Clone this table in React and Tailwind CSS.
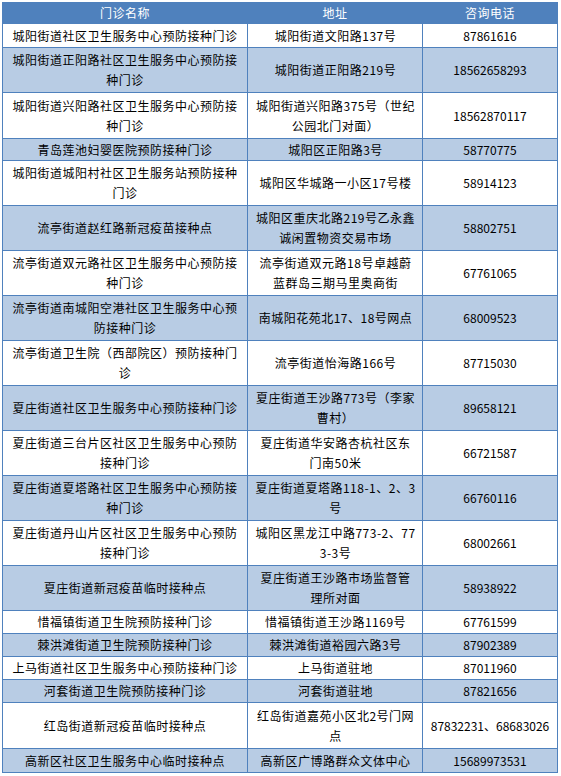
import React from 'react';

// row heights include the 1px divider line on top
const rows = [
  { name: '城阳街道社区卫生服务中心预防接种门诊', addr: '城阳街道文阳路137号', tel: '87861616', h: 'h-[24px]' },
  { name: '城阳街道正阳路社区卫生服务中心预防接种门诊', addr: '城阳街道正阳路219号', tel: '18562658293', h: 'h-[45px]' },
  { name: '城阳街道兴阳路社区卫生服务中心预防接种门诊', addr: '城阳街道兴阳路375号（世纪公园北门对面）', tel: '18562870117', h: 'h-[46px]' },
  { name: '青岛莲池妇婴医院预防接种门诊', addr: '城阳区正阳路3号', tel: '58770775', h: 'h-[22px]' },
  { name: '城阳街道城阳村社区卫生服务站预防接种门诊', addr: '城阳区华城路一小区17号楼', tel: '58914123', h: 'h-[45px]' },
  { name: '流亭街道赵红路新冠疫苗接种点', addr: '城阳区重庆北路219号乙永鑫诚闲置物资交易市场', tel: '58802751', h: 'h-[45px]' },
  { name: '流亭街道双元路社区卫生服务中心预防接种门诊', addr: '流亭街道双元路18号卓越蔚蓝群岛三期马里奥商街', tel: '67761065', h: 'h-[45px]' },
  { name: '流亭街道南城阳空港社区卫生服务中心预防接种门诊', addr: '南城阳花苑北17、18号网点', tel: '68009523', h: 'h-[45px]' },
  { name: '流亭街道卫生院（西部院区）预防接种门诊', addr: '流亭街道怡海路166号', tel: '87715030', h: 'h-[45px]' },
  { name: '夏庄街道社区卫生服务中心预防接种门诊', addr: '夏庄街道王沙路773号（李家曹村）', tel: '89658121', h: 'h-[45px]' },
  { name: '夏庄街道三台片区社区卫生服务中心预防接种门诊', addr: '夏庄街道华安路杏杭社区东门南50米', tel: '66721587', h: 'h-[45px]' },
  { name: '夏庄街道夏塔路社区卫生服务中心预防接种门诊', addr: '夏庄街道夏塔路118-1、2、3号', tel: '66760116', h: 'h-[45px]' },
  { name: '夏庄街道丹山片区社区卫生服务中心预防接种门诊', addr: '城阳区黑龙江中路773-2、773-3号', tel: '68002661', h: 'h-[45px]' },
  { name: '夏庄街道新冠疫苗临时接种点', addr: '夏庄街道王沙路市场监督管理所对面', tel: '58938922', h: 'h-[45px]' },
  { name: '惜福镇街道卫生院预防接种门诊', addr: '惜福镇街道王沙路1169号', tel: '67761599', h: 'h-[23px]' },
  { name: '棘洪滩街道卫生院预防接种门诊', addr: '棘洪滩街道裕园六路3号', tel: '87902389', h: 'h-[23px]' },
  { name: '上马街道社区卫生服务中心预防接种门诊', addr: '上马街道驻地', tel: '87011960', h: 'h-[23px]' },
  { name: '河套街道卫生院预防接种门诊', addr: '河套街道驻地', tel: '87821656', h: 'h-[23px]' },
  { name: '红岛街道新冠疫苗临时接种点', addr: '红岛街道嘉苑小区北2号门网点', tel: '87832231、68683026', h: 'h-[46px]' },
  { name: '高新区社区卫生服务中心临时接种点', addr: '高新区广博路群众文体中心', tel: '15689973531', h: 'h-[23px]' },
];

const grid = 'grid grid-cols-[245px_175px_134px] divide-x divide-[#4f81bd]';
const cell = 'flex items-center justify-center text-center break-all';

export default function App() {
  return (
    <div className="bg-white min-h-screen pt-[2px] pl-[2px] font-['Noto_Sans_CJK_SC','Noto_Sans',sans-serif] text-[12px] leading-[20px] tracking-[0.5px] text-black">
      <div className="w-[556px] border border-[#4f81bd] divide-y divide-[#4f81bd]">
        {/* header */}
        <div className={`${grid} h-[21px] bg-[#4f81bd] text-white`}>
          <div className={cell}>门诊名称</div>
          <div className={cell}>地址</div>
          <div className={cell}>咨询电话</div>
        </div>

        {rows.map((r, i) => (
          <div key={i} className={`${grid} ${r.h} ${i % 2 ? 'bg-[#b8cce4]' : 'bg-white'}`}>
            <div className={`${cell} px-[7px]`}>{r.name}</div>
            <div className={`${cell} pl-[7px] pr-[6px]`}>{r.addr}</div>
            <div className={`${cell} px-[3px] tracking-normal`}>{r.tel}</div>
          </div>
        ))}
      </div>
    </div>
  );
}
